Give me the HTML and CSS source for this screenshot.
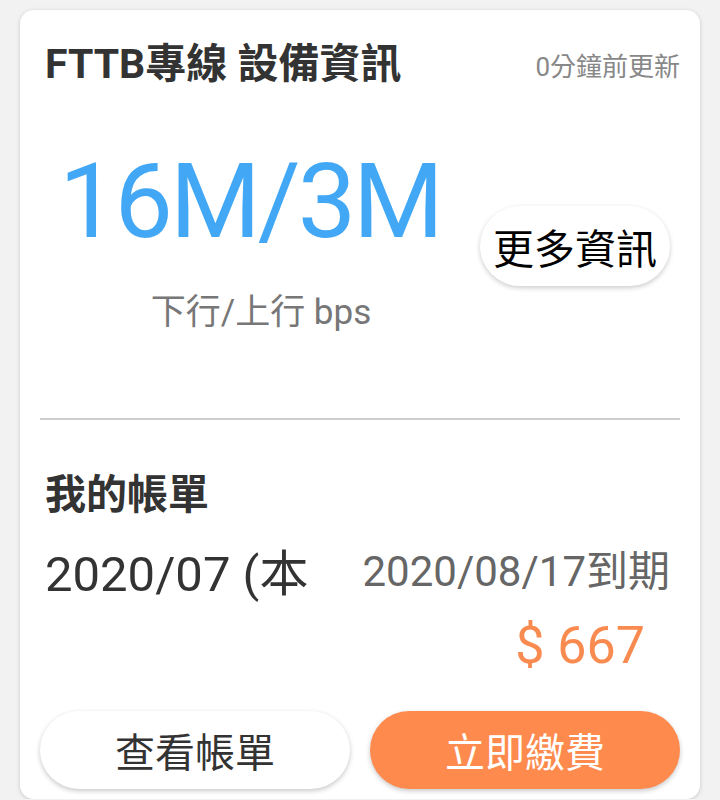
FILE: index.html
```html
<!DOCTYPE html>
<html lang="zh-Hant">
  <head>
    <meta charset="UTF-8" />
    <meta name="viewport" content="width=device-width, initial-scale=1.0" />
    <title>FTTB專線 設備資訊</title>
    <link rel="stylesheet" href="styles.css">
  </head>
  <body>
    <div class="card">
      <div class="card-head">
        <h1 class="card-title">FTTB專線 設備資訊</h1>
        <span class="updated">0分鐘前更新</span>
      </div>

      <div class="speed-row">
        <div class="speed">
          <div class="speed-value">16M/3M</div>
          <div class="speed-label">下行/上行 bps</div>
        </div>
        <button class="more-btn" type="button">更多資訊</button>
      </div>

      <hr class="divider" />

      <h2 class="bill-title">我的帳單</h2>
      <div class="bill-row">
        <div class="bill-period">2020/07 (本期)</div>
        <div class="bill-due">2020/08/17到期</div>
      </div>
      <div class="bill-amount">$ 667</div>

      <div class="actions">
        <button class="pill-btn" type="button">查看帳單</button>
        <button class="pill-btn pay" type="button">立即繳費</button>
      </div>
    </div>
  </body>
</html>
```

FILE: styles.css
```css
body {
  margin: 0;
  padding: 10px 20px 0;
  background-color: #f2f2f2;
  font-family: Roboto, "Noto Sans CJK TC", sans-serif;
  color: #333;
}
.card {
  background-color: #fff;
  border-radius: 14px;
  box-shadow: 0 1px 4px rgba(0, 0, 0, 0.18);
  padding: 0 20px;
  height: 789px;
  box-sizing: border-box;
}
.card-head {
  display: flex;
  justify-content: space-between;
  align-items: center;
  padding: 28px 0 0 5px;
}
.card-title {
  margin: 0;
  font-size: 41px;
  line-height: 52px;
  font-weight: bold;
  color: #333;
}
.updated {
  font-size: 26px;
  color: #888;
}
.speed-row {
  display: flex;
  align-items: center;
  margin-top: 52px;
}
.speed {
  flex: 1;
  text-align: center;
  padding-right: 20px;
}
.speed-value {
  font-size: 104px;
  line-height: 120px;
  color: #42a8f6;
  letter-spacing: -3px;
}
.speed-label {
  margin-top: 29px;
  padding-left: 22px;
  font-size: 35px;
  line-height: 44px;
  color: #777;
}
.more-btn {
  margin: 14px 10px 0 0;
  width: 190px;
  height: 80px;
  border: none;
  border-radius: 40px;
  background-color: #fff;
  box-shadow: 0 2px 5px rgba(0, 0, 0, 0.2);
  font-family: inherit;
  font-size: 41px;
  color: #000;
  padding: 0;
}
.divider {
  margin: 83px 0 0;
  border: none;
  border-top: 2px solid #cdcdcd;
}
.bill-title {
  margin: 49px 0 0 5px;
  font-size: 41px;
  line-height: 52px;
  font-weight: bold;
  color: #333;
}
.bill-row {
  display: grid;
  grid-template-columns: 264px 1fr;
  align-items: center;
  margin-top: 25px;
  padding: 0 10px 0 5px;
}
.bill-period {
  overflow: hidden;
  white-space: nowrap;
  font-size: 49px;
  line-height: 58px;
  color: #333;
}
.bill-due {
  text-align: right;
  white-space: nowrap;
  font-size: 42px;
  line-height: 50px;
  color: #666;
  margin-bottom: 6px;
}
.bill-amount {
  margin-top: 12px;
  text-align: right;
  padding-right: 35px;
  font-size: 52px;
  line-height: 60px;
  color: #f98b50;
}
.actions {
  display: grid;
  grid-template-columns: 1fr 1fr;
  gap: 20px;
  margin-top: 35px;
}
.pill-btn {
  height: 78px;
  border: none;
  border-radius: 39px;
  background-color: #fff;
  box-shadow: 0 2px 5px rgba(0, 0, 0, 0.22);
  font-family: inherit;
  font-size: 40px;
  color: #333;
}
.pill-btn.pay {
  background-color: #fe8a4e;
  color: #fff;
}
```
